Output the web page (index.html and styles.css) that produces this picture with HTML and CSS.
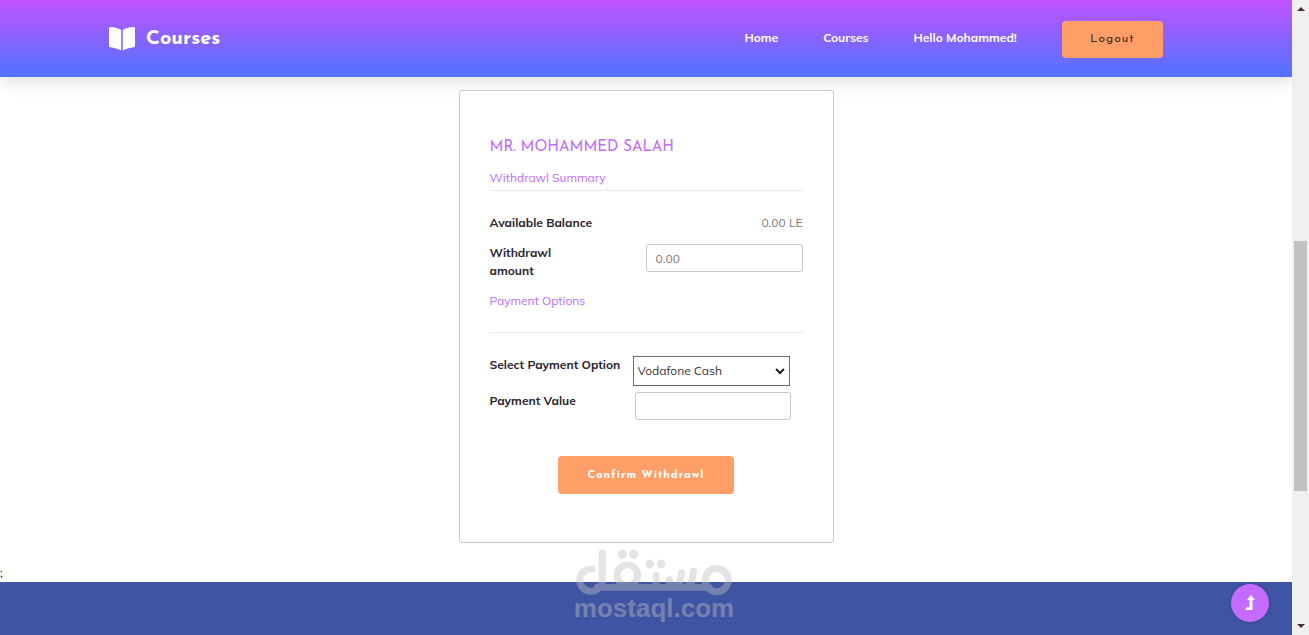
FILE: index.html
```html
<!DOCTYPE html>
<html lang="en">
  <head>
    <meta charset="UTF-8" />
    <meta name="viewport" content="width=device-width, initial-scale=1.0" />
    <title>Courses</title>
    <link rel="stylesheet" href="styles.css">
  </head>
  <body>
    <div class="page">
      <header class="header">
        <a href="#" class="logo">
          <svg class="logo-icon" viewBox="0 0 26 24" aria-hidden="true">
            <path d="M0 1.5Q0 0 1.5 0C6 .2 9.500 1.200 12.200 3V23.500C9 21.800 5.500 20.600 1.200 20.200Q0 20 0 19ZM26 1.500Q26 0 24.500 0C20 .2 16.500 1.200 13.800 3V23.500C17 21.800 20.500 20.600 24.800 20.200Q26 20 26 19Z" />
          </svg>
          Courses
        </a>
        <nav class="nav">
          <a href="#">Home</a>
          <a href="#">Courses</a>
          <a href="#">Hello Mohammed!</a>
          <button type="button" class="btn btn-logout">Logout</button>
        </nav>
      </header>
      <main class="main">
        <form class="card">
          <h1 class="card-name">MR. MOHAMMED SALAH</h1>
          <h2 class="card-title underlined">Withdrawl Summary</h2>
          <div class="row balance">
            <span class="label">Available Balance</span>
            <span class="amount">0.00 LE</span>
          </div>
          <div class="row withdraw">
            <label for="amount" class="label">Withdrawl amount</label>
            <input type="text" id="amount" class="field" placeholder="0.00" />
          </div>
          <h2 class="card-title">Payment Options</h2>
          <hr class="line" />
          <div class="options">
            <label for="option" class="label">Select Payment Option</label>
            <div class="select">
              <select id="option">
                <option>Vodafone Cash</option>
              </select>
              <svg class="chevron" viewBox="0 0 10 7" aria-hidden="true">
                <path d="M1 1L5 5L9 1" />
              </svg>
            </div>
            <label for="value" class="label">Payment Value</label>
            <input type="text" id="value" class="field" />
          </div>
          <button type="button" class="btn btn-confirm">Confirm Withdrawl</button>
        </form>
      </main>
      <div class="stray">;</div>
      <footer class="footer"></footer>
      <div class="watermark">
        <svg viewBox="45 25 477 145" aria-hidden="true">
          <path d="M97 88C72 88 59 104 59 122A34 34 0 0 0 127 122V40" />
          <path class="base" d="M112 144H450" />
          <circle class="ring" cx="203" cy="107" r="31" />
          <circle class="ring" cx="473" cy="122" r="35" />
          <path d="M290 108V140M367 100L361 130Q358 140 345 140H330V120M403 95L397 130Q394 140 384 140" />
          <circle cx="188" cy="44" r="14" />
          <circle cx="222" cy="44" r="14" />
          <circle cx="271" cy="73" r="13" />
          <circle cx="305" cy="73" r="13" />
        </svg>
        <span>mostaql.com</span>
      </div>
      <a href="#" class="to-top" aria-label="Back to top">
        <svg viewBox="0 0 10 16" aria-hidden="true">
          <path d="M6 0L10 5H7.500V15H0L2 12H4.500V5H2Z" />
        </svg>
      </a>
    </div>
    <div class="scrollbar" aria-hidden="true">
      <span class="arrow up"></span>
      <span class="thumb"></span>
      <span class="arrow down"></span>
    </div>
  </body>
</html>
```

FILE: styles.css
```css
* {
  box-sizing: border-box;
}
body {
  margin: 0;
  display: flex;
  height: 100vh;
  overflow: hidden;
  background-color: #fff;
  color: #2b2530;
  font-family: Muli, Mulish, "Open Sans", sans-serif;
  font-size: 12px;
  line-height: 18px;
}
.page {
  position: relative;
  flex: 1;
  display: flex;
  flex-direction: column;
}
.header {
  display: flex;
  justify-content: space-between;
  align-items: center;
  padding: 21px 10% 19px 109px;
  background: linear-gradient(#c153ff, #5073ff);
  box-shadow: 0 0 20px rgba(0, 0, 0, 0.2);
}
.logo {
  display: flex;
  align-items: center;
  gap: 11px;
  padding-bottom: 2px;
  color: #fff;
  font-family: "Josefin Sans", Lato, sans-serif;
  font-size: 20px;
  font-weight: 900;
  text-decoration: none;
}
.logo-icon {
  width: 26px;
  height: 24px;
  fill: #fff;
}
.nav {
  display: flex;
  align-items: center;
  gap: 45px;
}
.nav a {
  color: #fff;
  font-weight: 700;
  text-decoration: none;
  padding-bottom: 3px;
}
.btn {
  border: none;
  border-radius: 4px;
  background-color: #ff9f67;
  font-family: "Josefin Sans", Lato, sans-serif;
  font-size: 12px;
  line-height: 18px;
  letter-spacing: 1px;
  white-space: nowrap;
}
.btn-logout {
  color: #3b2b2b;
  width: 101px;
  padding: 9px 0 10px;
  font-weight: 400;
}
.main {
  padding-top: 13px;
}
.card {
  position: relative;
  width: 375px;
  margin: 0 auto;
  padding: 47px 30px 48px;
  display: flex;
  flex-direction: column;
  border: 1px solid #c8c8c8;
  border-radius: 3px;
  background-color: #fff;
}
.card-name,
.card-title {
  margin: 0;
  color: #c06cff;
  font-weight: 400;
}
.card-name {
  padding-bottom: 11px;
  font-family: "Josefin Sans", Lato, sans-serif;
  font-size: 15px;
  line-height: 20px;
}
.card-title {
  font-size: 12px;
}
.underlined {
  padding-bottom: 3px;
  border-bottom: 1px solid #ebe7f7;
}
.row {
  display: flex;
  justify-content: space-between;
}
.label {
  font-weight: 700;
}
.balance {
  padding: 23px 0 12px;
}
.amount {
  color: #777;
}
.withdraw {
  padding-bottom: 12px;
}
.withdraw .label {
  width: 80px;
}
.field {
  width: 157px;
  height: 28px;
  border: 1px solid #c8c8c8;
  border-radius: 3px;
  background-color: #fff;
  padding: 1px 9px 0;
  color: #555;
  font: inherit;
}
.field::placeholder {
  color: #777;
}
.line {
  width: 100%;
  margin: 22px 0 23px;
  border: none;
  border-top: 1px solid #ebe7f7;
}
.options {
  display: grid;
  grid-template-columns: 143px 157px;
  row-gap: 6px;
}
.select {
  display: flex;
  align-items: center;
}
.select select {
  appearance: none;
  width: 157px;
  height: 30px;
  border: 1px solid #6b6b6b;
  border-radius: 0;
  background-color: #fff;
  padding: 0 20px 0 4px;
  color: #3b3340;
  font: inherit;
}
.chevron {
  width: 10px;
  height: 7px;
  margin-left: -15px;
  pointer-events: none;
  fill: none;
  stroke: #2b1c24;
  stroke-width: 2;
}
.options .field {
  width: 156px;
  margin-left: 2px;
}
.btn-confirm {
  align-self: center;
  width: 176px;
  margin-top: 36px;
  padding: 11px 0 9px;
  color: #fff;
  font-size: 11px;
  font-weight: 700;
}
.stray {
  margin-top: 21px;
  color: #222;
}
.footer {
  flex: 1;
  background-color: #4054a4;
}
/* logo stamp over the bottom of the page */
.watermark {
  position: absolute;
  left: 575px;
  bottom: 15px;
  width: 158px;
  opacity: 0.42;
  color: #bfbfbf;
  font: bold 26px/24px "Liberation Sans", sans-serif;
  text-align: center;
}
.watermark svg {
  display: block;
  width: 158px;
  height: 48px;
  fill: currentColor;
}
.watermark span {
  display: flex;
  justify-content: center;
}
.watermark path,
.watermark .ring {
  fill: none;
  stroke: currentColor;
  stroke-width: 21;
  stroke-linecap: round;
}
.to-top {
  position: absolute;
  right: 23px;
  bottom: 13px;
  width: 38px;
  height: 38px;
  display: flex;
  align-items: center;
  justify-content: center;
  border-radius: 50%;
  background-color: #c56cff;
  box-shadow: 0 0 4px rgba(0, 0, 0, 0.2);
}
.to-top svg {
  width: 10px;
  height: 16px;
  fill: #fff;
}
.scrollbar {
  position: relative;
  width: 17px;
  padding: 7px 2px;
  display: flex;
  flex-direction: column;
  justify-content: space-between;
  align-items: center;
  background-color: #f0f0f0;
}
.thumb {
  width: 13px;
  height: 250px;
  margin-top: 97px;
  background-color: #c1c1c1;
}
.arrow {
  border: 4px solid transparent;
}
.up {
  border-top: none;
  border-bottom-color: #4b3038;
}
.down {
  border-bottom: none;
  border-top-color: #4b3038;
}
```
